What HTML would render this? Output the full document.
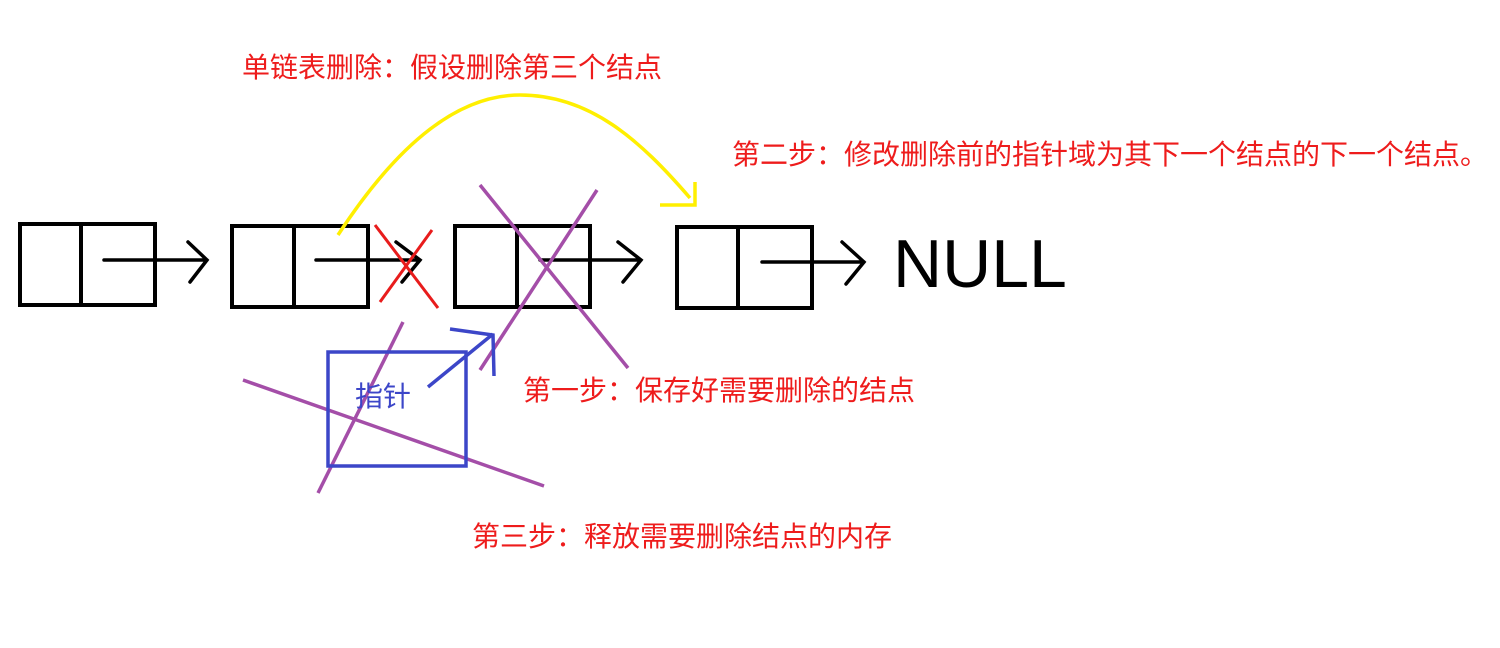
<!DOCTYPE html>
<html><head><meta charset="utf-8"><style>
html,body{margin:0;padding:0;background:#fff;width:1500px;height:648px;overflow:hidden}
svg{position:absolute;left:0;top:0}
.t{position:absolute;font-family:"Liberation Sans","Noto Sans CJK SC",sans-serif;color:#ee1c1c;font-size:28px;white-space:nowrap;line-height:1}
</style></head><body>
<svg width="1500" height="648" viewBox="0 0 1500 648">
<g fill="none" stroke="#000" stroke-width="4">
<rect x="20" y="224" width="135" height="81"/><line x1="81" y1="224" x2="81" y2="305"/>
<rect x="232" y="226" width="136" height="81"/><line x1="294" y1="226" x2="294" y2="307"/>
<rect x="455" y="226" width="135" height="81"/><line x1="517" y1="226" x2="517" y2="307"/>
<rect x="677" y="227" width="135" height="81"/><line x1="738" y1="227" x2="738" y2="308"/>
<g stroke-width="3.5" stroke-linecap="round">
<path d="M104 260 H207 M188 242 L207 260 L190 282"/>
<path d="M316 260 H420 M396 242 L420 260 L402 282"/>
<path d="M540 260 H641 M618 242 L641 260 L623 282"/>
<path d="M762 262 H864 M842 242 L864 262 L846 284"/>
</g>
</g>
<path d="M338 235 C400 140 460 95 520 95 C590 95 640 140 690 198" fill="none" stroke="#ffef00" stroke-width="3.5"/>
<path d="M695 182 V205 H660" fill="none" stroke="#ffef00" stroke-width="3.5"/>
<g stroke="#e81c1c" stroke-width="3"><line x1="375" y1="225" x2="438" y2="308"/><line x1="432" y1="230" x2="380" y2="302"/></g>
<g stroke="#a44ea8" stroke-width="3.5">
<line x1="480" y1="185" x2="628" y2="368"/><line x1="597" y1="190" x2="480" y2="370"/>
<line x1="243" y1="380" x2="544" y2="486"/><line x1="403" y1="322" x2="318" y2="493"/>
</g>
<g fill="none" stroke="#3c46c8" stroke-width="3.5">
<rect x="328" y="352" width="138" height="114"/>
<path d="M428 387 L493 334 M450 329 L493 335 L494 376"/>
</g>
<text x="893" y="287" font-family="Liberation Sans, sans-serif" font-size="68" fill="#000">NULL</text>
</svg>
<div class="t" style="left:242px;top:54px">单链表删除：假设删除第三个结点</div>
<div class="t" style="left:732px;top:141px">第二步：修改删除前的指针域为其下一个结点的下一个结点。</div>
<div class="t" style="left:523px;top:377px">第一步：保存好需要删除的结点</div>
<div class="t" style="left:472px;top:523px">第三步：释放需要删除结点的内存</div>
<div class="t" style="left:355px;top:383px;color:#3c46c8">指针</div>
</body></html>
